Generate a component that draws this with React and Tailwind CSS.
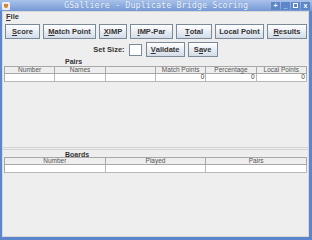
const Btn = ({ w, children }) => (
  <div
    className={`flex h-[15px] shrink-0 items-center justify-center border border-[#7a8a99] bg-gradient-to-b from-white to-[#d3dce8] text-[7.5px] font-bold leading-none text-[#333] ${w}`}
  >
    {children}
  </div>
);

const U = ({ children }) => <span className="underline underline-offset-1">{children}</span>;

const Table = ({ cols, values }) => (
  <div className="mx-[1px] border-l border-[#a8a8a8]">
    <div className="flex">
      {cols.map((c, i) => (
        <div
          key={i}
          className="flex h-[8px] flex-1 items-center justify-center border-y border-r border-[#a8a8a8] bg-[#eeeeee] text-[6.5px] leading-none text-[#555]"
        >
          {c}
        </div>
      ))}
    </div>
    <div className="flex">
      {cols.map((c, i) => (
        <div
          key={i}
          className="flex h-[8px] flex-1 items-center justify-end border-b border-r border-[#b8b8b8] bg-white pr-[1px] text-[6.5px] leading-none text-[#333]"
        >
          {values[i]}
        </div>
      ))}
    </div>
  </div>
);

const WinBtn = ({ children }) => (
  <div className="flex h-[8px] w-[9px] items-center justify-center bg-[#5d86c6] text-[7px] font-bold leading-none text-white">
    {children}
  </div>
);

export default function App() {
  return (
    <div
      className="flex h-[240px] w-[312px] flex-col bg-[#5b86cc] pb-[3px] pl-[2px] pr-[3px]"
      style={{ fontFamily: '"Liberation Sans", Arial, sans-serif' }}
    >
      {/* title bar */}
      <div className="relative -ml-[2px] -mr-[3px] flex h-[11px] items-center justify-between bg-gradient-to-b from-[#a9c2ea] to-[#7599d4] px-[2px]">
        <div className="flex h-[8px] w-[8px] items-center justify-center rounded-[1px] bg-[#e8eef8]">
          <div className="h-[4px] w-[4px] rounded-b-[2px] bg-[#d9822b]" />
        </div>
        <div
          className="absolute inset-x-0 top-[1px] text-center text-[8.5px] leading-none text-[#eef3fb]"
          style={{ fontFamily: '"DejaVu Sans Mono", monospace', textShadow: '0 0 1px #6a8cc4' }}
        >
          GSalliere - Duplicate Bridge Scoring
        </div>
        <div className="flex gap-[1px]">
          <WinBtn>+</WinBtn>
          <WinBtn>_</WinBtn>
          <WinBtn>
            <div className="h-[5px] w-[5px] border border-white" />
          </WinBtn>
          <WinBtn>x</WinBtn>
        </div>
      </div>

      {/* body */}
      <div className="flex flex-1 flex-col border border-[#d8d8d8] bg-[#eeeeee]">
        <div className="flex h-[10px] items-center px-[3px] text-[7.5px] font-bold leading-none text-[#333]">
          <U>F</U>ile
        </div>

        <div className="mt-[2px] flex gap-[3px] pl-[2px]">
          <Btn w="w-[35px]"><U>S</U>core</Btn>
          <Btn w="w-[53px]"><U>M</U>atch Point</Btn>
          <Btn w="w-[28px]"><U>X</U>IMP</Btn>
          <Btn w="w-[43px]"><U>I</U>MP-Par</Btn>
          <Btn w="w-[36px]"><U>T</U>otal</Btn>
          <Btn w="w-[49px]">Local Point</Btn>
          <Btn w="w-[40px]"><U>R</U>esults</Btn>
        </div>

        <div className="mt-[3px] flex items-center justify-center gap-[3px]">
          <span className="mr-[1px] text-[7.5px] font-bold text-[#333]">Set Size:</span>
          <div className="h-[12px] w-[13px] border border-[#7a8a99] bg-white" />
          <Btn w="ml-[1px] w-[39px] h-[14px]"><U>V</U>alidate</Btn>
          <Btn w="w-[30px] h-[14px]">S<U>a</U>ve</Btn>
        </div>

        {/* pairs */}
        <div className="flex flex-1 flex-col">
          <div className="flex h-[9px] items-center pl-[62px] text-[7px] font-bold leading-none text-[#333]">
            Pairs
          </div>
          <Table
            cols={['Number', 'Names', '', 'Match Points', 'Percentage', 'Local Points']}
            values={['', '', '', '0', '0', '0']}
          />
        </div>

        <div className="h-[3px] border-y border-[#d2d2d2]" />

        {/* boards */}
        <div className="flex h-[86px] flex-col">
          <div className="flex h-[7px] items-center pl-[62px] pt-[1px] text-[7px] font-bold leading-none text-[#333]">
            Boards
          </div>
          <Table cols={['Number', 'Played', 'Pairs']} values={['', '', '']} />
        </div>
      </div>
    </div>
  );
}
